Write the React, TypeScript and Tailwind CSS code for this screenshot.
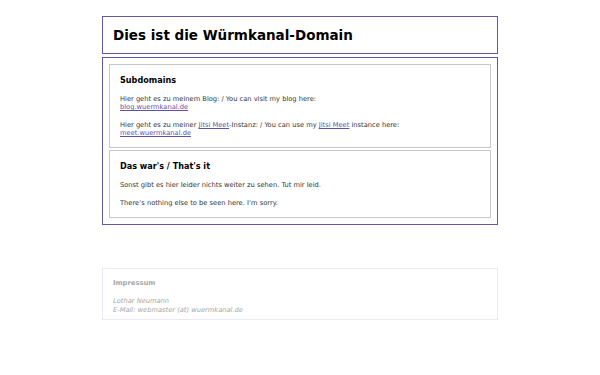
export default function App() {
  const font = { fontFamily: '"DejaVu Sans", Verdana, sans-serif' };
  const link = "text-[#5d52a3] underline";
  return (
    <div className="min-h-[375px] bg-white text-[#333]" style={font}>
      <div className="mx-auto w-[396px] pt-[16px]">
        <header className="border border-[#6556a6] h-[38px] flex items-center px-[10px]">
          <h1 className="text-[13.5px] font-bold text-black">Dies ist die Würmkanal-Domain</h1>
        </header>
        <main className="mt-[3px] border border-[#6556a6] p-[6px] flex flex-col gap-[2px]">
          <section className="border border-[#c8c8c8] px-[10px] pt-[9px] pb-[10px]">
            <h2 className="text-[8.1px] font-bold text-black leading-[12px] mb-[9px]">Subdomains</h2>
            <p className="text-[6.7px] leading-[8px] mb-[10px]">
              Hier geht es zu meinem Blog: / You can visit my blog here:
              <br />
              <a className={link}>blog.wuermkanal.de</a>
            </p>
            <p className="text-[6.7px] leading-[8px]">
              Hier geht es zu meiner <a className={link}>Jitsi Meet</a>-Instanz: / You can use my <a className={link}>Jitsi Meet</a> instance here:
              <br />
              <a className={link}>meet.wuermkanal.de</a>
            </p>
          </section>
          <section className="border border-[#c8c8c8] px-[10px] pt-[9px] pb-[10px]">
            <h2 className="text-[8.1px] font-bold text-black leading-[12px] mb-[9px]">Das war's / That's it</h2>
            <p className="text-[6.7px] leading-[8px] mb-[10px]">Sonst gibt es hier leider nichts weiter zu sehen. Tut mir leid.</p>
            <p className="text-[6.7px] leading-[8px]">There’s nothing else to be seen here. I’m sorry.</p>
          </section>
        </main>
        <footer className="mt-[43px] border border-[#ebe8f7] px-[10px] pt-[9px] pb-[4px] text-[#a6a6a6]">
          <h3 className="text-[6.8px] font-bold leading-[10px] mb-[9px]">Impressum</h3>
          <p className="text-[6.7px] italic leading-[9px]">
            Lothar Neumann
            <br />
            E-Mail: webmaster (at) wuermkanal.de
          </p>
        </footer>
      </div>
    </div>
  );
}
